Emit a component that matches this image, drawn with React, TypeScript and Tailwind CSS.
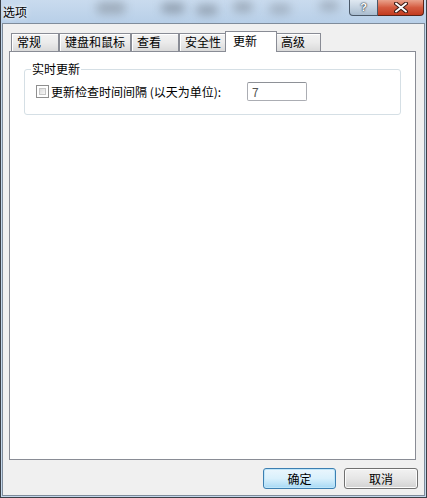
import { useState } from "react"

const tabs = [
  { id: "general", label: "常规", w: "w-[48px]" },
  { id: "keys", label: "键盘和鼠标", w: "w-[72px]" },
  { id: "view", label: "查看", w: "w-[48px]" },
  { id: "security", label: "安全性", w: "w-[48px]" },
  { id: "update", label: "更新", w: "w-[52px]" },
  { id: "advanced", label: "高级", w: "w-[46px]" },
]

function CaptionButtons() {
  return (
    <div className="flex h-[16px] mr-[2px]">
      <div className="w-[29px] h-[16px] rounded-bl-[4px] border border-t-0 border-[#4a5868] bg-gradient-to-b from-[#dfe8f1] via-[#c5d3e1] to-[#a9bccf] flex items-start justify-center pt-[1px] text-white text-[11px] font-bold leading-[13px] font-['Liberation_Sans',sans-serif] [text-shadow:0_0_2px_#1d2630,0_0_1px_#1d2630]">
        ?
      </div>
      <div className="w-[46px] h-[16px] rounded-br-[4px] border border-t-0 border-l-0 border-[#5a2318] bg-gradient-to-b from-[#e9a18b] via-[#d45b40] to-[#c23a1e] flex items-center justify-center">
        <svg width="14" height="11" viewBox="0 0 14 11">
          <path d="M2 1.5 L12 9.5 M12 1.5 L2 9.5" stroke="#3a1a14" strokeWidth="4" strokeLinecap="round" />
          <path d="M2 1.5 L12 9.5 M12 1.5 L2 9.5" stroke="#ffffff" strokeWidth="2" strokeLinecap="round" />
        </svg>
      </div>
    </div>
  )
}

export default function App() {
  const [active, setActive] = useState("update")
  const [checked, setChecked] = useState(false)

  return (
    <div className="w-[427px] h-[498px] flex flex-col overflow-hidden bg-[#c3d7eb] border-x border-b border-[#3b4047] text-[12px] leading-[14px] text-black font-['Noto_Sans_CJK_SC','Noto_Sans',sans-serif]">
      {/* title bar */}
      <div className="relative h-[23px] shrink-0 flex justify-between items-start bg-gradient-to-b from-[#c9dbee] to-[#b8cfe8] overflow-hidden">
        <div className="absolute left-[95px] top-[2px] w-[30px] h-[12px] rounded-full bg-[#8d99a6] blur-[5px] opacity-70" />
        <div className="absolute left-[160px] top-[3px] w-[24px] h-[10px] rounded-full bg-[#6e7986] blur-[5px] opacity-60" />
        <div className="absolute left-[195px] top-[5px] w-[22px] h-[10px] rounded-full bg-[#75808d] blur-[5px] opacity-60" />
        <div className="absolute left-[232px] top-[2px] w-[20px] h-[10px] rounded-full bg-[#808a96] blur-[5px] opacity-60" />
        <div className="absolute left-[268px] top-[4px] w-[22px] h-[10px] rounded-full bg-[#828c98] blur-[5px] opacity-50" />
        <div className="absolute left-[318px] top-[1px] w-[20px] h-[10px] rounded-full bg-[#7d8894] blur-[5px] opacity-50" />
        <span className="relative pl-[2px] pt-[5px] text-[12px] [text-shadow:0_0_6px_#ffffff,0_0_3px_#ffffff]">选项</span>
        <div className="relative">
          <CaptionButtons />
        </div>
      </div>

      {/* client area */}
      <div className="flex-1 mx-[1px] mb-[1px] border border-[#7f8c9b] bg-[#f0f0f0] flex flex-col pt-[7px] pl-[6px]">
        {/* tab strip */}
        <div className="relative z-10 h-[20px] flex items-end pl-[2px]">
          {tabs.map((t) =>
            t.id === active ? (
              <button
                key={t.id}
                onClick={() => setActive(t.id)}
                className={`${t.w} h-[21px] -mx-[2px] -mb-[1px] relative z-10 border border-b-0 border-[#898c95] bg-white text-left pl-[7px] pt-[2px] self-end`}
              >
                <span className="block h-full">{t.label}</span>
              </button>
            ) : (
              <button
                key={t.id}
                onClick={() => setActive(t.id)}
                className={`${t.w} h-[18px] border border-b-0 border-[#898c95] bg-gradient-to-b from-[#f3f3f3] via-[#ebebeb] to-[#dadada] shadow-[inset_1px_1px_0_#ffffff] text-left pl-[5px] pt-[1px] whitespace-nowrap`}
              >
                <span className="block h-full">{t.label}</span>
              </button>
            )
          )}
        </div>

        {/* tab panel */}
        <div className="h-[409px] mr-[8px] border border-[#898c95] bg-white pt-[10px] px-[14px]">
          <fieldset className="h-[53px] border border-[#d5dfe5] rounded-[3px] pr-[8px] pt-[6px]">
            <legend className="ml-[6px] px-[1px]">实时更新</legend>
            <div className="flex items-center h-[19px] pl-[11px]">
              <button
                onClick={() => setChecked(!checked)}
                className="w-[13px] h-[13px] border border-[#8f8f8f] bg-white p-[2px] shrink-0"
              >
                <span className="block w-full h-full border border-[#c6c6c6] bg-gradient-to-br from-[#dcdcdc] to-[#f8f8f8]" />
              </button>
              <span className="ml-[2px] whitespace-nowrap">更新检查时间间隔 (以天为单位):</span>
              <div className="ml-auto mr-[85px] w-[60px] h-[19px] border border-[#abadb3] border-t-[#8e9197] rounded-[2px] bg-white pl-[4px] flex items-center text-[#555555]">
                7
              </div>
            </div>
          </fieldset>
        </div>

        {/* buttons */}
        <div className="flex justify-end gap-[8px] mt-[8px] mr-[6px]">
          <button className="w-[73px] h-[21px] rounded-[3px] border border-[#3c7fb1] bg-gradient-to-b from-[#eaf6fd] via-[#d9f0fc] to-[#a7d9f5] shadow-[inset_0_0_0_1px_#bfe6fa]">
            确定
          </button>
          <button className="w-[74px] h-[21px] rounded-[3px] border border-[#707070] bg-gradient-to-b from-[#f2f2f2] via-[#e6e6e6] to-[#d2d2d2] shadow-[inset_0_0_0_1px_#fcfcfc]">
            取消
          </button>
        </div>
      </div>
    </div>
  )
}
